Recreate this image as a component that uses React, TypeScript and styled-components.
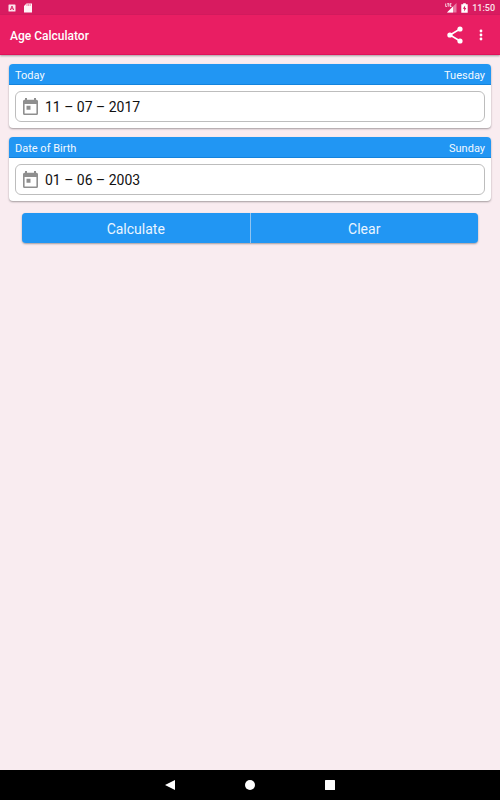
import React, { useState } from "react";
import styled, { createGlobalStyle } from "styled-components";

const GlobalStyle = createGlobalStyle`
  *, *::before, *::after { box-sizing: border-box; }
  body {
    margin: 0;
    background: #f9ecf0;
    font-family: Roboto, "Liberation Sans", sans-serif;
  }
  button, input { font-family: inherit; }
`;

const Screen = styled.div`
  display: flex;
  flex-direction: column;
  min-height: 100vh;
`;

const StatusBar = styled.div`
  display: flex;
  align-items: center;
  justify-content: space-between;
  height: 15px;
  padding: 0 5px 0 8px;
  background: #d81b60;
  color: #fbe4ec;
`;

const StatusGroup = styled.div<{ $gap: number }>`
  display: flex;
  align-items: center;
  gap: ${(p) => p.$gap}px;
`;

const Clock = styled.time`
  padding-top: 1px;
  font-size: 9px;
  line-height: 14px;
  font-weight: 500;
`;

const AppBar = styled.header`
  display: flex;
  align-items: center;
  height: 40px;
  padding: 0 10px;
  background: #e91e63;
  color: #fff;
  border-bottom: 1px solid #e0105a;
  box-shadow: 0 1px 2px rgba(0, 0, 0, 0.35);
`;

const Title = styled.h1`
  flex: 1;
  margin: 0;
  padding-top: 2px;
  font-size: 12px;
  line-height: 20px;
  font-weight: 500;
`;

const IconButton = styled.button<{ $width: number }>`
  display: flex;
  align-items: center;
  justify-content: center;
  width: ${(p) => p.$width}px;
  height: 32px;
  padding: 0;
  border: 0;
  background: none;
  color: inherit;
  cursor: pointer;
`;

const Content = styled.main`
  display: flex;
  flex: 1;
  flex-direction: column;
  gap: 9px;
  padding: 9px;
`;

const Card = styled.section`
  overflow: hidden;
  border-radius: 4px;
  background: #fff;
  box-shadow: 0 1px 2px rgba(0, 0, 0, 0.35);
`;

const CardHeader = styled.div`
  display: flex;
  align-items: center;
  justify-content: space-between;
  height: 21px;
  padding: 2px 6px 0;
  background: #2196f3;
  border-bottom: 1px solid #1483dc;
  color: #f2f9ff;
  font-size: 11px;
  line-height: 19px;
`;

const Field = styled.div`
  display: flex;
  align-items: center;
  gap: 6px;
  height: 31px;
  margin: 6px;
  padding: 0 6px;
  border: 1px solid #bdbdbd;
  border-radius: 6px;
`;

const DateInput = styled.input`
  flex: 1;
  min-width: 0;
  padding: 0;
  border: 0;
  outline: 0;
  background: transparent;
  color: #111;
  font-size: 14px;
  line-height: 20px;
`;

const Actions = styled.div`
  display: flex;
  gap: 1px;
  height: 30px;
  margin: 3px 13px 0;
  overflow: hidden;
  border-radius: 4px;
  background: #90c4f0;
  box-shadow: 0 1px 2px rgba(0, 0, 0, 0.35);
`;

const ActionButton = styled.button`
  flex: 1;
  padding: 1px 0 0;
  border: 0;
  background: #2196f3;
  color: #eaf5ff;
  font-size: 14px;
  line-height: 20px;
  cursor: pointer;
`;

const NavBar = styled.nav`
  display: flex;
  align-items: center;
  justify-content: center;
  gap: 48px;
  height: 30px;
  background: #000;
  color: #fff;
`;

const DAYS = ["Sunday", "Monday", "Tuesday", "Wednesday", "Thursday", "Friday", "Saturday"];
const TODAY = "11 – 07 – 2017";

function weekday(value: string) {
  const [day, month, year] = value.split("–").map((part) => Number(part.trim()));
  const date = new Date(year, month - 1, day);
  return DAYS[date.getDay()] ?? "";
}

const CalendarIcon = () => (
  <svg width="17" height="18" viewBox="0 0 17 18" fill="#8f8f8f" aria-hidden="true">
    <path
      fillRule="evenodd"
      d="M3 0h2v1.700h7V0h2v1.700h.5A1.500 1.500 0 0 1 16 3.200v12.300a1.500 1.500 0 0 1-1.500 1.500h-12A1.500 1.500 0 0 1 1 15.500V3.200a1.500 1.500 0 0 1 1.500-1.500H3zM2.600 6v9.400h11.800V6z"
    />
    <path d="M4.500 7.800h4v4h-4z" />
  </svg>
);

const ShareIcon = () => (
  <svg width="16" height="18" viewBox="0 0 16 18" fill="currentColor" aria-hidden="true">
    <path d="M13 3 3 9l10 6" fill="none" stroke="currentColor" strokeWidth="1.6" />
    <circle cx="13" cy="3" r="2.6" />
    <circle cx="2.9" cy="9" r="2.6" />
    <circle cx="13" cy="15" r="2.6" />
  </svg>
);

const MoreIcon = () => (
  <svg width="4" height="12" viewBox="0 0 4 12" fill="currentColor" aria-hidden="true">
    <circle cx="2" cy="2" r="1.4" />
    <circle cx="2" cy="6" r="1.4" />
    <circle cx="2" cy="10" r="1.4" />
  </svg>
);

const KeyboardIcon = () => (
  <svg width="8" height="8" viewBox="0 0 8 8" aria-hidden="true">
    <rect width="7" height="7" x=".5" y=".5" rx=".6" fill="#fbe4ec" />
    <path d="M2.3 6 4 2l1.7 4M3 4.8h2" fill="none" stroke="#d81b60" strokeWidth=".9" />
  </svg>
);

const SdCardIcon = () => (
  <svg width="8" height="10" viewBox="0 0 8 10" aria-hidden="true">
    <path d="M2.5.5H8v9H0V3z" fill="#fff5f8" />
    <path d="M3 1.3v1.4M4.6 1.3v1.4M6.2 1.3v1.4" stroke="#d81b60" strokeWidth=".7" />
  </svg>
);

const SignalIcon = () => (
  <svg width="12" height="10" viewBox="0 0 12 10" aria-hidden="true">
    <path d="M11.5 0v9.5H2z" fill="#ea7ba3" />
    <path d="M8 3.5v6H2z" fill="#fff" />
    <path d="M.7.5v3h1.2M2.2.7h2M3.2.7v3M6.5.7H5v2.8h1.5M5 2.1h1.2" fill="none" stroke="#fbe4ec" strokeWidth=".9" />
  </svg>
);

const BatteryIcon = () => (
  <svg width="7" height="10" viewBox="0 0 7 10" aria-hidden="true">
    <path d="M2.2.3h2.6v1h1.9v8.4H.3V1.3h1.9z" fill="#fff" />
    <path d="M4.1 2.5 1.8 5.8h1.4v2.6l2.1-3.5H4.1z" fill="#d81b60" />
  </svg>
);

interface DateCardProps {
  id: string;
  label: string;
  value: string;
  onChange: (value: string) => void;
}

function DateCard({ id, label, value, onChange }: DateCardProps) {
  return (
    <Card>
      <CardHeader>
        <label htmlFor={id}>{label}</label>
        <span>{weekday(value)}</span>
      </CardHeader>
      <Field>
        <CalendarIcon />
        <DateInput id={id} type="text" value={value} onChange={(e) => onChange(e.target.value)} />
      </Field>
    </Card>
  );
}

export default function App() {
  const [today, setToday] = useState(TODAY);
  const [birth, setBirth] = useState("01 – 06 – 2003");

  const clear = () => {
    setToday(TODAY);
    setBirth("");
  };

  return (
    <Screen>
      <GlobalStyle />
      <StatusBar>
        <StatusGroup $gap={8}>
          <KeyboardIcon />
          <SdCardIcon />
        </StatusGroup>
        <StatusGroup $gap={4}>
          <SignalIcon />
          <BatteryIcon />
          <Clock>11:50</Clock>
        </StatusGroup>
      </StatusBar>
      <AppBar>
        <Title>Age Calculator</Title>
        <IconButton type="button" aria-label="Share" $width={34}>
          <ShareIcon />
        </IconButton>
        <IconButton type="button" aria-label="More options" $width={18}>
          <MoreIcon />
        </IconButton>
      </AppBar>
      <Content>
        <DateCard id="today" label="Today" value={today} onChange={setToday} />
        <DateCard id="birth" label="Date of Birth" value={birth} onChange={setBirth} />
        <Actions>
          <ActionButton type="button">Calculate</ActionButton>
          <ActionButton type="button" onClick={clear}>Clear</ActionButton>
        </Actions>
      </Content>
      <NavBar>
        <IconButton type="button" aria-label="Back" $width={32}>
          <svg width="10" height="10" viewBox="0 0 10 10" fill="currentColor" aria-hidden="true">
            <path d="M10 0v10L0 5z" />
          </svg>
        </IconButton>
        <IconButton type="button" aria-label="Home" $width={32}>
          <svg width="10" height="10" viewBox="0 0 10 10" fill="currentColor" aria-hidden="true">
            <circle cx="5" cy="5" r="5" />
          </svg>
        </IconButton>
        <IconButton type="button" aria-label="Recent apps" $width={32}>
          <svg width="10" height="10" viewBox="0 0 10 10" fill="currentColor" aria-hidden="true">
            <rect width="10" height="10" rx=".5" />
          </svg>
        </IconButton>
      </NavBar>
    </Screen>
  );
}
